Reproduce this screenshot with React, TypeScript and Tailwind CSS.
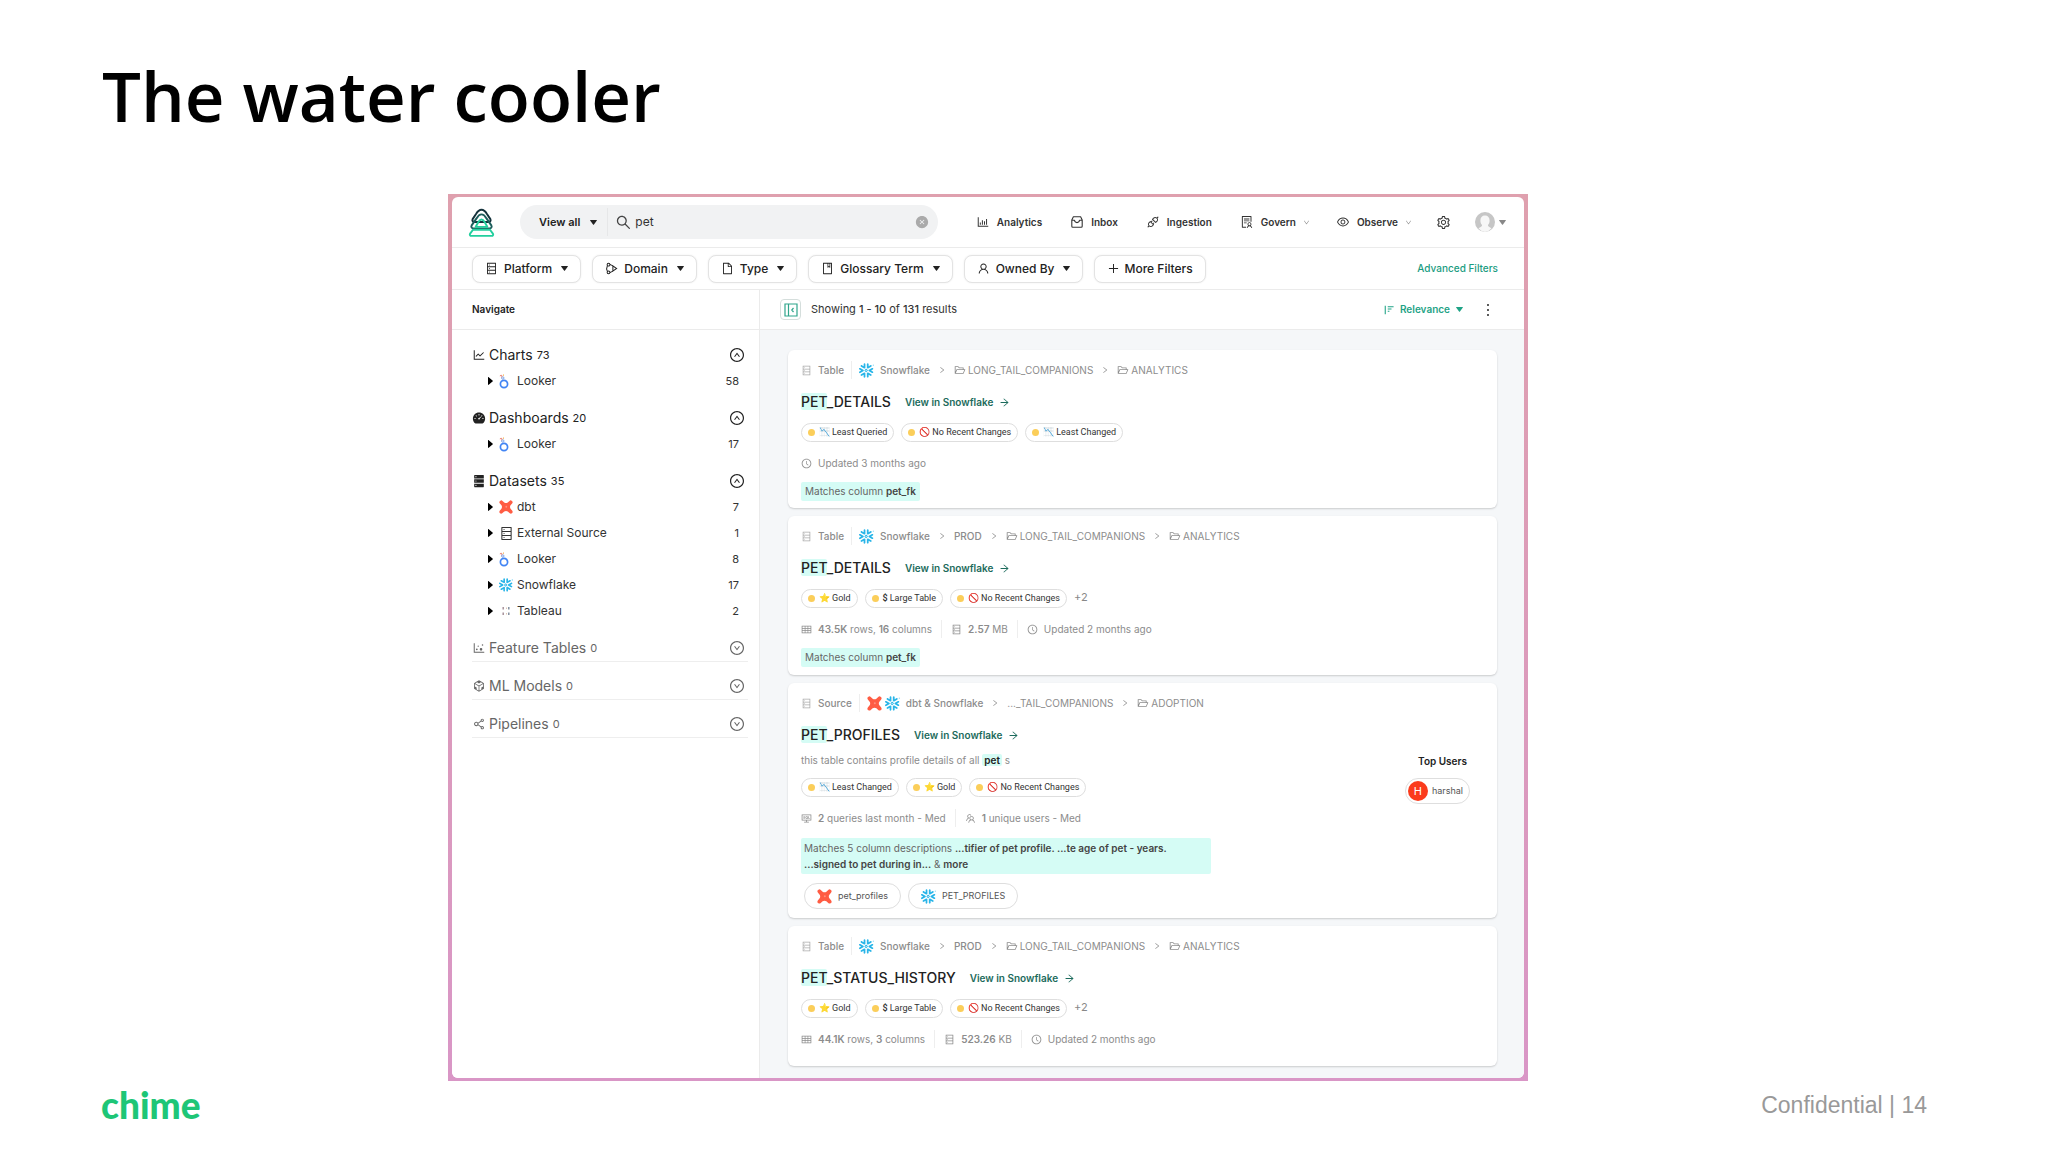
import { ReactNode } from "react";
import {
    AiFillCloseCircle,
    AiFillDashboard,
    AiFillDatabase,
    AiOutlineApi,
    AiOutlineArrowRight,
    AiOutlineBarChart,
    AiOutlineBook,
    AiOutlineClockCircle,
    AiOutlineCodeSandbox,
    AiOutlineConsoleSql,
    AiOutlineDatabase,
    AiOutlineDotChart,
    AiOutlineDown,
    AiOutlineDownCircle,
    AiOutlineEye,
    AiOutlineFile,
    AiOutlineFolderOpen,
    AiOutlineLineChart,
    AiOutlineMore,
    AiOutlinePlus,
    AiOutlineRight,
    AiOutlineSearch,
    AiOutlineSetting,
    AiOutlineShareAlt,
    AiOutlineSolution,
    AiOutlineTable,
    AiOutlineTeam,
    AiOutlineUpCircle,
    AiOutlineUser,
} from "react-icons/ai";
import { SiSnowflake } from "react-icons/si";

const Caret = ({ className = "" }: { className?: string }): JSX.Element => (
    <svg viewBox="0 0 10 7" className={`h-[5px] w-[7px] ${className}`} fill="currentColor">
        <path d="M0.5 0h9a.4.4 0 0 1 .3.7L5.4 6.600a.5.5 0 0 1-.8 0L.2.7A.4.4 0 0 1 .5 0z" />
    </svg>
);

const CaretRight = (): JSX.Element => (
    <svg viewBox="0 0 5 8" className="h-2 w-[5px]" fill="currentColor">
        <path d="M0 .4v7.2c0 .3.4.5.7.2L4.8 4.3a.4.4 0 0 0 0-.6L.7.2C.4-.1 0 .1 0 .4z" />
    </svg>
);

const SnowflakeIcon = ({ className = "size-[15px]" }: { className?: string }): JSX.Element => (
    <SiSnowflake className={`text-[#29b5e8] ${className}`} />
);

const DbtIcon = ({ className = "size-[15px]" }: { className?: string }): JSX.Element => (
    <svg viewBox="0 0 24 24" className={className}>
        <path
            fill="#ff5c43"
            d="M3.400.7c.9-.3 1.600 0 2.600.8l3 2.800c1.800 1.300 4.200 1.300 6 0l3-2.800c1-.8 1.700-1.100 2.600-.8 1.700.4 2.900 1.700 2.800 3-.1.800-.4 1.500-1 2.200l-2.600 3.300c-1.200 1.700-1.200 3.900 0 5.600l2.600 3.300c.6.7.9 1.400 1 2.200.1 1.300-1.100 2.600-2.800 3-.9.200-1.600-.1-2.600-.9l-3-2.700c-1.800-1.300-4.200-1.300-6 0l-3 2.700c-1 .8-1.700 1.100-2.600.9-1.700-.4-2.900-1.700-2.800-3 .1-.8.4-1.500 1-2.200l2.600-3.300c1.200-1.700 1.200-3.900 0-5.600L1.600 5.900C1 5.200.7 4.500.6 3.700c-.1-1.300 1.100-2.600 2.800-3z"
        />
        <circle cx="12.500" cy="11.500" r="1.600" fill="#ff8f7d" />
    </svg>
);

const LookerIcon = (): JSX.Element => (
    <svg viewBox="0 0 10 15" className="h-[15px] w-[10px]" fill="none">
        <circle cx="5" cy="10" r="3.600" stroke="#4285f4" strokeWidth="1.700" />
        <circle cx="3.800" cy="4" r="1.200" stroke="#7aa2e8" strokeWidth="1" />
        <path d="M1.200 2.200a.9.9 0 1 1 1.200.8" stroke="#e8705f" strokeWidth="1" />
        <path d="M4 1.200h1" stroke="#f3b04a" strokeWidth="1.200" />
    </svg>
);

const TableauIcon = (): JSX.Element => (
    <svg viewBox="0 0 14 14" className="size-[14px]" strokeWidth="1.400">
        <path d="M4.200 3v2.600M4.200 8.400V11" stroke="#a08a94" />
        <path d="M9.800 3v2.600M9.800 8.400V11" stroke="#7a8799" />
        <path d="M7 4.200h.8M7 9.800h.8" stroke="#d5b9a4" />
    </svg>
);

const DomainIcon = (): JSX.Element => (
    <svg viewBox="0 0 14 14" className="size-[13px]" fill="none" stroke="currentColor" strokeWidth="1.100">
        <path d="M2.500 4.200C1.600 6 1.600 8 2.500 9.800M5.300 2.600 8.500 4.200M5.300 11.400l3.200-1.600" />
        <circle cx="3.800" cy="2.900" r="1.500" />
        <circle cx="3.800" cy="11.100" r="1.500" />
        <path d="M8.500 4.200 12.500 7l-4 2.800z" />
    </svg>
);

const InboxIcon = (): JSX.Element => (
    <svg viewBox="0 0 14 14" className="size-[14px]" fill="none" stroke="currentColor" strokeWidth="1.100" strokeLinejoin="round">
        <path d="M1.800 5 3.400 1.800h7.200L12.200 5v6.200a1 1 0 0 1-1 1H2.800a1 1 0 0 1-1-1zM1.800 5.300h2.700C4.700 6.800 5.700 7.600 7 7.600s2.300-.8 2.500-2.300h2.700" />
    </svg>
);

const SortIcon = (): JSX.Element => (
    <svg viewBox="0 0 12 12" className="size-[10px]" fill="none" stroke="currentColor" strokeWidth="1.300">
        <path d="M1.500 1v10M4.500 2h7M4.500 4.800h4.500M4.500 7.500h2" />
    </svg>
);

const PanelIcon = (): JSX.Element => (
    <svg viewBox="0 0 14 14" className="size-[14px]" fill="none" stroke="#2fa58b" strokeWidth="1.200">
        <path d="M1 1h12v12H1zM4.500 1v12M9.500 5 7.800 7l1.700 2" />
    </svg>
);

const DataHubLogo = (): JSX.Element => (
    <svg viewBox="0 0 28 30" className="h-[29px] w-[27px]" fill="none" strokeWidth="2" strokeLinejoin="round">
        <path d="M8.500 6 4.800 11.500c-.8 1.600.2 3 2 3h14.400c1.800 0 2.800-1.400 2-3L19.500 6C18 3.300 16 1.800 14 1.800S10 3.300 8.500 6z" stroke="#14323b" />
        <path d="M9 10.500 3.800 18c-.9 1.600.1 3.200 2 3.200h16.400c1.900 0 2.900-1.600 2-3.200L19 10.500c-1.500-2.600-3.200-3.900-5-3.900s-3.500 1.300-5 3.900z" stroke="#1d5e5c" />
        <path d="M10.800 14.500 8 19.500h12l-2.800-5c-1-1.700-2-2.600-3.200-2.600s-2.200.9-3.200 2.600z" stroke="#23cf9e" />
        <path d="M5.200 22.500h17.600l3 4c.8 1.200 0 2.400-1.400 2.400H3.600c-1.400 0-2.200-1.200-1.400-2.400z" stroke="#23cf9e" />
    </svg>
);

interface NavItemProps {
    icon: ReactNode;
    title: string;
    className?: string;
    arrow?: boolean;
}

const NavItem = ({ icon, title, className = "", arrow }: NavItemProps): JSX.Element => (
    <a href="#" className={`flex items-center gap-[7px] text-[10px] font-semibold text-[#333] ${className}`}>
        <span className="text-[14px]">{icon}</span>
        {title}
        {arrow && <AiOutlineDown className="size-[7px] text-[#888]" />}
    </a>
);

interface FilterButtonProps {
    icon: ReactNode;
    title: string;
    caret?: boolean;
}

const FilterButton = ({ icon, title, caret = true }: FilterButtonProps): JSX.Element => (
    <button className="flex h-7 items-center rounded-lg border border-[#e3e3e3] bg-white px-3 text-xs font-medium text-[#222] shadow-[0_0_2px_rgba(0,0,0,0.08)]">
        <span className={`text-[13px] ${caret ? "mr-[6px]" : "mr-1"}`}>{icon}</span>
        {title}
        {caret && <Caret className="ml-[9px]" />}
    </button>
);

interface BrowseItem {
    icon: ReactNode;
    title: string;
    count: number;
}

interface BrowseSectionProps {
    icon: ReactNode;
    title: string;
    count: number;
    items?: BrowseItem[];
}

const BrowseSection = ({ icon, title, count, items = [] }: BrowseSectionProps): JSX.Element => {
    const isOpen = items.length > 0;

    return (
        <section>
            <button
                className={`flex w-full items-center pr-[3px] text-left ${
                    isOpen ? "h-[26px] text-[#222]" : "h-[27px] border-b border-[#eee] text-[#666]"
                }`}
            >
                <span className="mr-[3px] text-[14px]">{icon}</span>
                <span className="text-sm">{title}</span>
                <span className="ml-1 text-[11px]">{count}</span>
                <span className="ml-auto text-[16px]">{isOpen ? <AiOutlineUpCircle /> : <AiOutlineDownCircle />}</span>
            </button>
            {items.map((item) => (
                <button key={item.title} className="flex h-[26px] w-full items-center pr-[9px] pl-4 text-left text-xs text-[#333]">
                    <span className="w-[11px] text-black">
                        <CaretRight />
                    </span>
                    <span className="flex w-[18px] items-center">{item.icon}</span>
                    {item.title}
                    <span className="ml-auto text-[11px]">{item.count}</span>
                </button>
            ))}
        </section>
    );
};

const tagIcons: Record<string, string> = {
    "Least Queried": "📉",
    "Least Changed": "📉",
    "No Recent Changes": "🚫",
    Gold: "⭐",
    "Large Table": "$",
};

const Tag = ({ title }: { title: string }): JSX.Element => (
    <span className="flex h-[19px] items-center rounded-full border border-[#dedede] px-[6px] font-['Roboto',sans-serif] text-[9px] text-[#333]">
        <span className="mr-1 size-[7px] rounded-full bg-[#fbce5a]" />
        <span className="mr-[2px] text-[9px] font-semibold">{tagIcons[title]}</span>
        {title}
    </span>
);

const Divider = ({ className = "mx-[9px]" }: { className?: string }): JSX.Element => (
    <span className={`h-[18px] w-px bg-[#eee] ${className}`} />
);

const Crumb = ({ title }: { title: string }): JSX.Element => (
    <>
        <AiOutlineRight className="mx-2 size-2" />
        {title !== "PROD" && !title.startsWith("...") && <AiOutlineFolderOpen className="mr-[2px] size-3" />}
        <span className={title === "PROD" ? "font-medium" : ""}>{title}</span>
    </>
);

interface ResultCardProps {
    kind?: string;
    platform?: string;
    icons?: ReactNode;
    path: string[];
    name: string;
    description?: ReactNode;
    tags: string[];
    more?: string;
    stats: ReactNode;
    side?: ReactNode;
    className?: string;
    children?: ReactNode;
}

const ResultCard = (props: ResultCardProps): JSX.Element => {
    const { kind = "Table", platform = "Snowflake", icons = <SnowflakeIcon />, className = "pb-[7px]" } = props;

    return (
        <article className={`flex rounded-md bg-white px-[13px] pt-[11px] shadow-[0_1px_2px_rgba(0,0,0,0.18)] ${className}`}>
            <div className="min-w-0 flex-1">
                <div className="flex h-[18px] items-center text-[10px] text-[#8c8c8c]">
                    <AiOutlineDatabase className="mr-[6px] size-[11px] text-[#aaa]" />
                    <span className="font-medium">{kind}</span>
                    <Divider className="mx-[7px]" />
                    <span className="mr-[6px] flex gap-[3px]">{icons}</span>
                    <span className="font-medium">{platform}</span>
                    {props.path.map((item) => (
                        <Crumb key={item} title={item} />
                    ))}
                </div>
                <div className="mt-[11px] flex h-6 items-center">
                    <h2 className="text-sm font-medium text-[#222]">
                        <mark className="rounded-xs bg-[#d5fcf5] text-inherit">PET</mark>
                        {props.name}
                    </h2>
                    <a href="#" className="ml-[14px] flex items-center gap-[6px] text-[10px] font-semibold text-[#1c6b5c]">
                        View in Snowflake
                        <AiOutlineArrowRight className="size-[11px]" />
                    </a>
                </div>
                {props.description}
                <div className="mt-[9px] flex gap-[7px]">
                    {props.tags.map((item) => (
                        <Tag key={item} title={item} />
                    ))}
                    {props.more && <span className="text-[11px]/4 text-[#888]">{props.more}</span>}
                </div>
                <div className="mt-3 flex h-[18px] items-center text-[10px] text-[#8c8c8c]">{props.stats}</div>
                {props.children}
            </div>
            {props.side}
        </article>
    );
};

const Updated = ({ title }: { title: string }): JSX.Element => (
    <>
        <AiOutlineClockCircle className="mr-[6px] size-[11px]" />
        Updated {title} ago
    </>
);

interface TableStatsProps {
    rows: string;
    columns: number;
    size: string;
    unit: string;
}

const TableStats = ({ rows, columns, size, unit }: TableStatsProps): JSX.Element => (
    <>
        <AiOutlineTable className="mr-[6px] size-[11px]" />
        <span>
            <b className="font-semibold">{rows}</b> rows, <b className="font-semibold">{columns}</b> columns
        </span>
        <Divider />
        <AiOutlineDatabase className="mr-[6px] size-[11px]" />
        <span>
            <b className="font-semibold">{size}</b> {unit}
        </span>
        <Divider />
        <Updated title="2 months" />
    </>
);

const MatchedColumn = (): JSX.Element => (
    <div className="mt-[10px] flex">
        <p className="rounded-xs bg-[#d5fcf5] px-1 text-[10px]/[19px] text-[#666]">
            Matches column <b className="font-semibold text-[#444]">pet_fk</b>
        </p>
    </div>
);

const looker = (count: number): BrowseItem => ({ icon: <LookerIcon />, title: "Looker", count });

const datasets: BrowseItem[] = [
    { icon: <DbtIcon className="size-[14px]" />, title: "dbt", count: 7 },
    { icon: <AiOutlineDatabase className="size-[15px]" />, title: "External Source", count: 1 },
    looker(8),
    { icon: <SnowflakeIcon className="size-[14px]" />, title: "Snowflake", count: 17 },
    { icon: <TableauIcon />, title: "Tableau", count: 2 },
];

const Header = (): JSX.Element => (
    <header className="flex h-[51px] items-center border-b border-[#ebebeb] pr-[18px] pl-4">
        <DataHubLogo />
        <div className="ml-[25px] flex h-[34px] w-[418px] items-center rounded-full bg-[#f1f2f3] pr-[9px] pl-[19px]">
            <button className="flex items-center text-[11px] font-semibold text-[#222]">
                View all
                <Caret className="ml-[10px]" />
            </button>
            <span className="mr-[7px] ml-[10px] h-7 w-px bg-[#e6e7e8]" />
            <AiOutlineSearch className="size-[17px] text-[#444]" />
            <input aria-label="Search" defaultValue="pet" className="ml-[3px] min-w-0 flex-1 bg-transparent text-xs text-[#333] outline-none" />
            <button aria-label="Clear">
                <AiFillCloseCircle className="size-[14px] text-[#aaa]" />
            </button>
        </div>
        <nav className="ml-auto flex items-center">
            <NavItem icon={<AiOutlineBarChart />} title="Analytics" />
            <NavItem icon={<InboxIcon />} title="Inbox" className="ml-7" />
            <NavItem icon={<AiOutlineApi />} title="Ingestion" className="ml-7" />
            <NavItem icon={<AiOutlineSolution />} title="Govern" className="ml-7" arrow />
            <NavItem icon={<AiOutlineEye />} title="Observe" className="ml-[26px]" arrow />
            <button aria-label="Settings" className="ml-6">
                <AiOutlineSetting className="size-[15px] text-[#333]" />
            </button>
            <button aria-label="Profile" className="ml-6 flex items-center gap-1">
                <svg viewBox="0 0 20 20" className="size-5">
                    <circle cx="10" cy="10" r="10" fill="#c6c6c6" />
                    <path d="M10 3.500c3 0 4.600 2 4.600 5 0 2-.7 3.500-1.700 4.500 0 1.500 1.600 2 3.600 3.200A10 10 0 0 1 10 20a10 10 0 0 1-6.500-3.800c2-1.200 3.600-1.700 3.600-3.200-1-1-1.700-2.500-1.700-4.500 0-3 1.600-5 4.600-5z" fill="#f7f7f7" />
                </svg>
                <Caret className="text-[#888]" />
            </button>
        </nav>
    </header>
);

const FilterBar = (): JSX.Element => (
    <div className="flex h-[42px] items-center gap-[11px] border-b border-[#ebebeb] pr-[26px] pl-5">
        <FilterButton icon={<AiOutlineDatabase />} title="Platform" />
        <FilterButton icon={<DomainIcon />} title="Domain" />
        <FilterButton icon={<AiOutlineFile />} title="Type" />
        <FilterButton icon={<AiOutlineBook />} title="Glossary Term" />
        <FilterButton icon={<AiOutlineUser />} title="Owned By" />
        <FilterButton icon={<AiOutlinePlus />} title="More Filters" caret={false} />
        <a href="#" className="ml-auto text-[10px] font-medium text-[#1a9c7f]">
            Advanced Filters
        </a>
    </div>
);

const Sidebar = (): JSX.Element => (
    <aside className="w-[308px] shrink-0 border-r border-[#ebebeb] bg-white">
        <div className="flex h-10 items-center border-b border-[#ebebeb] pl-5 text-[10px] font-semibold text-[#222]">Navigate</div>
        <div className="flex flex-col gap-[11px] pt-3 pr-[11px] pl-5">
            <BrowseSection icon={<AiOutlineLineChart />} title="Charts" count={73} items={[looker(58)]} />
            <BrowseSection icon={<AiFillDashboard />} title="Dashboards" count={20} items={[looker(17)]} />
            <BrowseSection icon={<AiFillDatabase />} title="Datasets" count={35} items={datasets} />
            <BrowseSection icon={<AiOutlineDotChart />} title="Feature Tables" count={0} />
            <BrowseSection icon={<AiOutlineCodeSandbox />} title="ML Models" count={0} />
            <BrowseSection icon={<AiOutlineShareAlt />} title="Pipelines" count={0} />
        </div>
    </aside>
);

const Results = (): JSX.Element => (
    <main className="flex min-w-0 flex-1 flex-col">
        <div className="flex h-10 items-center border-b border-[#ebebeb] bg-white pr-[27px] pl-5">
            <button aria-label="Hide sidebar" className="flex size-[21px] items-center justify-center rounded-sm border border-[#d5dedc]">
                <PanelIcon />
            </button>
            <p className="ml-[10px] text-[11px] text-[#333]">
                Showing <b className="font-medium">1 - 10</b> of <b className="font-medium">131</b> results
            </p>
            <button className="ml-auto flex items-center text-[10px] font-semibold text-[#1fa386]">
                <SortIcon />
                <span className="mx-[6px]">Relevance</span>
                <Caret />
            </button>
            <button aria-label="More" className="ml-4">
                <AiOutlineMore className="size-[18px] text-[#222]" />
            </button>
        </div>
        <div className="flex flex-1 flex-col gap-2 bg-[#f5f7f9] pt-5 pr-[27px] pb-3 pl-7">
            <ResultCard
                path={["LONG_TAIL_COMPANIONS", "ANALYTICS"]}
                name="_DETAILS"
                tags={["Least Queried", "No Recent Changes", "Least Changed"]}
                stats={<Updated title="3 months" />}
            >
                <MatchedColumn />
            </ResultCard>
            <ResultCard
                path={["PROD", "LONG_TAIL_COMPANIONS", "ANALYTICS"]}
                name="_DETAILS"
                tags={["Gold", "Large Table", "No Recent Changes"]}
                more="+2"
                stats={<TableStats rows="43.5K" columns={16} size="2.57" unit="MB" />}
                className="pb-2"
            >
                <MatchedColumn />
            </ResultCard>
            <ResultCard
                kind="Source"
                platform="dbt & Snowflake"
                icons={
                    <>
                        <DbtIcon />
                        <SnowflakeIcon />
                    </>
                }
                path={["..._TAIL_COMPANIONS", "ADOPTION"]}
                name="_PROFILES"
                description={
                    <p className="mt-1 text-[10px]/[18px] text-[#8c8c8c]">
                        this table contains profile details of all <mark className="rounded-xs bg-[#d5fcf5] px-[2px] font-semibold text-[#222]">pet</mark> s
                    </p>
                }
                tags={["Least Changed", "Gold", "No Recent Changes"]}
                stats={
                    <>
                        <AiOutlineConsoleSql className="mr-[6px] size-[11px]" />
                        <span>
                            <b className="font-semibold">2</b> queries last month - Med
                        </span>
                        <Divider />
                        <AiOutlineTeam className="mr-[6px] size-[11px]" />
                        <span>
                            <b className="font-semibold">1</b> unique users - Med
                        </span>
                    </>
                }
                side={
                    <div className="mt-[60px] mr-[14px] flex flex-col items-end">
                        <div className="pr-[3px] text-[10px] font-semibold text-[#222]">Top Users</div>
                        <a href="#" className="mt-[9px] flex h-[26px] items-center gap-1 rounded-full border border-[#dedede] pr-[6px] pl-[2px] text-[9px] text-[#555]">
                            <span className="flex size-5 items-center justify-center rounded-full bg-[#fb3b1c] text-[11px] text-white">H</span>
                            harshal
                        </a>
                    </div>
                }
                className="pb-[9px]"
            >
                <p className="mt-[11px] w-[410px] rounded-xs bg-[#d5fcf5] px-[3px] py-[2px] text-[10px]/4 text-[#666]">
                    Matches 5 column descriptions <b className="font-semibold text-[#444]">...tifier of pet profile. ...te age of pet - years.</b>
                    <br />
                    <b className="font-semibold text-[#444]">...signed to pet during in...</b> &amp; <b className="font-semibold text-[#444]">more</b>
                </p>
                <div className="mt-[9px] flex gap-[7px] pl-[3px] text-[9px] text-[#555]">
                    <a href="#" className="flex h-[26px] items-center gap-[6px] rounded-full border border-[#dedede] px-3">
                        <DbtIcon />
                        pet_profiles
                    </a>
                    <a href="#" className="flex h-[26px] items-center gap-[6px] rounded-full border border-[#dedede] px-3">
                        <SnowflakeIcon />
                        PET_PROFILES
                    </a>
                </div>
            </ResultCard>
            <ResultCard
                path={["PROD", "LONG_TAIL_COMPANIONS", "ANALYTICS"]}
                name="_STATUS_HISTORY"
                tags={["Gold", "Large Table", "No Recent Changes"]}
                more="+2"
                stats={<TableStats rows="44.1K" columns={3} size="523.26" unit="KB" />}
                className="pb-[18px]"
            />
        </div>
    </main>
);

export default function App(): JSX.Element {
    return (
        <div className="flex min-h-screen flex-col bg-white font-['Inter',sans-serif]">
            <h1 className="px-[102px] pt-[45px] font-['Open_Sans',sans-serif] text-[69px]/[100px] font-semibold text-black">The water cooler</h1>
            <div className="mt-[49px] grid grid-cols-[448fr_1080fr_520fr]">
                <div className="col-start-2 bg-linear-to-b from-[#dfa0ae] to-[#d996c6] px-1 py-[3px]">
                    <div className="overflow-hidden rounded-md bg-white">
                        <Header />
                        <FilterBar />
                        <div className="flex">
                            <Sidebar />
                            <Results />
                        </div>
                    </div>
                </div>
            </div>
            <footer className="flex items-center justify-between px-[101px]">
                <div className="font-['Lato',sans-serif] text-[37px]/[48px] font-black text-[#1ec677]">chime</div>
                <div className="pr-5 font-['Liberation_Sans',sans-serif] text-[23px] text-[#999]">Confidential | 14</div>
            </footer>
        </div>
    );
}
